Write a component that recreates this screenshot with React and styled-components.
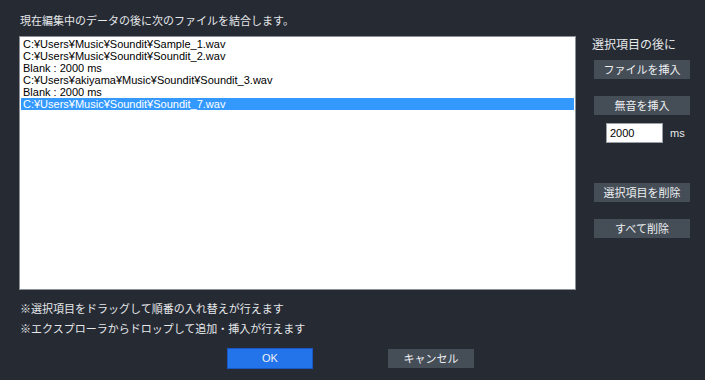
import React from "react";
import styled, { createGlobalStyle } from "styled-components";

const Global = createGlobalStyle`
  html, body { margin: 0; padding: 0; background: #252a33; }
  * { box-sizing: border-box; }
`;

const Dialog = styled.div`
  width: 705px;
  height: 380px;
  background: #252a33;
  color: #e6e8ea;
  font-family: "Noto Sans CJK JP", "Noto Sans", sans-serif;
  font-size: 11px;
  padding: 12px 0 0 19px;
  display: flex;
  flex-direction: column;
  overflow: hidden;
`;

const Title = styled.div`
  line-height: 16px;
  height: 16px;
  padding-left: 1px;
  margin-bottom: 8px;
`;

const Main = styled.div`
  display: flex;
  align-items: flex-start;
`;

const List = styled.div`
  width: 557px;
  height: 254px;
  background: #ffffff;
  border: 1px solid #8c9199;
  padding: 1px 1px;
  font-family: "Liberation Sans", Arial, sans-serif;
  font-size: 11px;
`;

const Item = styled.div`
  height: 12px;
  line-height: 12px;
  padding-left: 2px;
  white-space: nowrap;
  color: ${(p) => (p.$selected ? "#ffffff" : "#000000")};
  background: ${(p) => (p.$selected ? "#3399ff" : "transparent")};
`;

const Side = styled.div`
  margin-left: 16px;
  width: 100px;
  display: flex;
  flex-direction: column;
`;

const SideLabel = styled.div`
  font-size: 12px;
  line-height: 16px;
  height: 16px;
  margin-bottom: 8px;
`;

const SideButton = styled.div`
  width: 96px;
  height: 19px;
  margin-left: 2px;
  margin-bottom: ${(p) => p.$mb || 0}px;
  background: #454d57;
  color: #eef0f2;
  display: flex;
  align-items: center;
  justify-content: center;
  line-height: 1;
`;

const DurationRow = styled.div`
  display: flex;
  align-items: center;
  margin-left: 14px;
  margin-bottom: 40px;
`;

const DurationInput = styled.div`
  width: 57px;
  height: 20px;
  background: #ffffff;
  border: 1px solid #9aa0a8;
  color: #000;
  font-family: "Liberation Sans", Arial, sans-serif;
  font-size: 11px;
  line-height: 18px;
  padding-left: 3px;
`;

const Unit = styled.span`
  margin-left: 7px;
  font-family: "Liberation Sans", Arial, sans-serif;
  font-size: 11px;
`;

const Notes = styled.div`
  margin-top: 8px;
  padding-left: 1px;
`;

const Note = styled.div`
  line-height: 20px;
  height: 20px;
`;

const Footer = styled.div`
  margin-top: 10px;
  padding-left: 208px;
  display: flex;
  align-items: flex-start;
  gap: 75px;
`;

const DialogButton = styled.div`
  width: 86px;
  height: ${(p) => (p.$primary ? 21 : 19)}px;
  margin-top: ${(p) => (p.$primary ? 0 : 1)}px;
  background: ${(p) => (p.$primary ? "#2374ea" : "#454d57")};
  border: ${(p) => (p.$primary ? "1px solid #1a57c6" : "none")};
  color: #eef0f2;
  display: flex;
  align-items: center;
  justify-content: center;
  font-family: ${(p) =>
    p.$primary ? '"Liberation Sans", Arial, sans-serif' : '"Noto Sans CJK JP", sans-serif'};
  font-size: 11px;
  line-height: 1;
`;

const items = [
  "C:¥Users¥Music¥Soundit¥Sample_1.wav",
  "C:¥Users¥Music¥Soundit¥Soundit_2.wav",
  "Blank : 2000 ms",
  "C:¥Users¥akiyama¥Music¥Soundit¥Soundit_3.wav",
  "Blank : 2000 ms",
  "C:¥Users¥Music¥Soundit¥Soundit_7.wav",
];

export default function App() {
  return (
    <>
      <Global />
      <Dialog>
        <Title>現在編集中のデータの後に次のファイルを結合します。</Title>
        <Main>
          <List>
            {items.map((t, i) => (
              <Item key={i} $selected={i === items.length - 1}>
                {t}
              </Item>
            ))}
          </List>
          <Side>
            <SideLabel>選択項目の後に</SideLabel>
            <SideButton $mb={17}>ファイルを挿入</SideButton>
            <SideButton $mb={8}>無音を挿入</SideButton>
            <DurationRow>
              <DurationInput>2000</DurationInput>
              <Unit>ms</Unit>
            </DurationRow>
            <SideButton $mb={17}>選択項目を削除</SideButton>
            <SideButton>すべて削除</SideButton>
          </Side>
        </Main>
        <Notes>
          <Note>※選択項目をドラッグして順番の入れ替えが行えます</Note>
          <Note>※エクスプローラからドロップして追加・挿入が行えます</Note>
        </Notes>
        <Footer>
          <DialogButton $primary>OK</DialogButton>
          <DialogButton>キャンセル</DialogButton>
        </Footer>
      </Dialog>
    </>
  );
}
